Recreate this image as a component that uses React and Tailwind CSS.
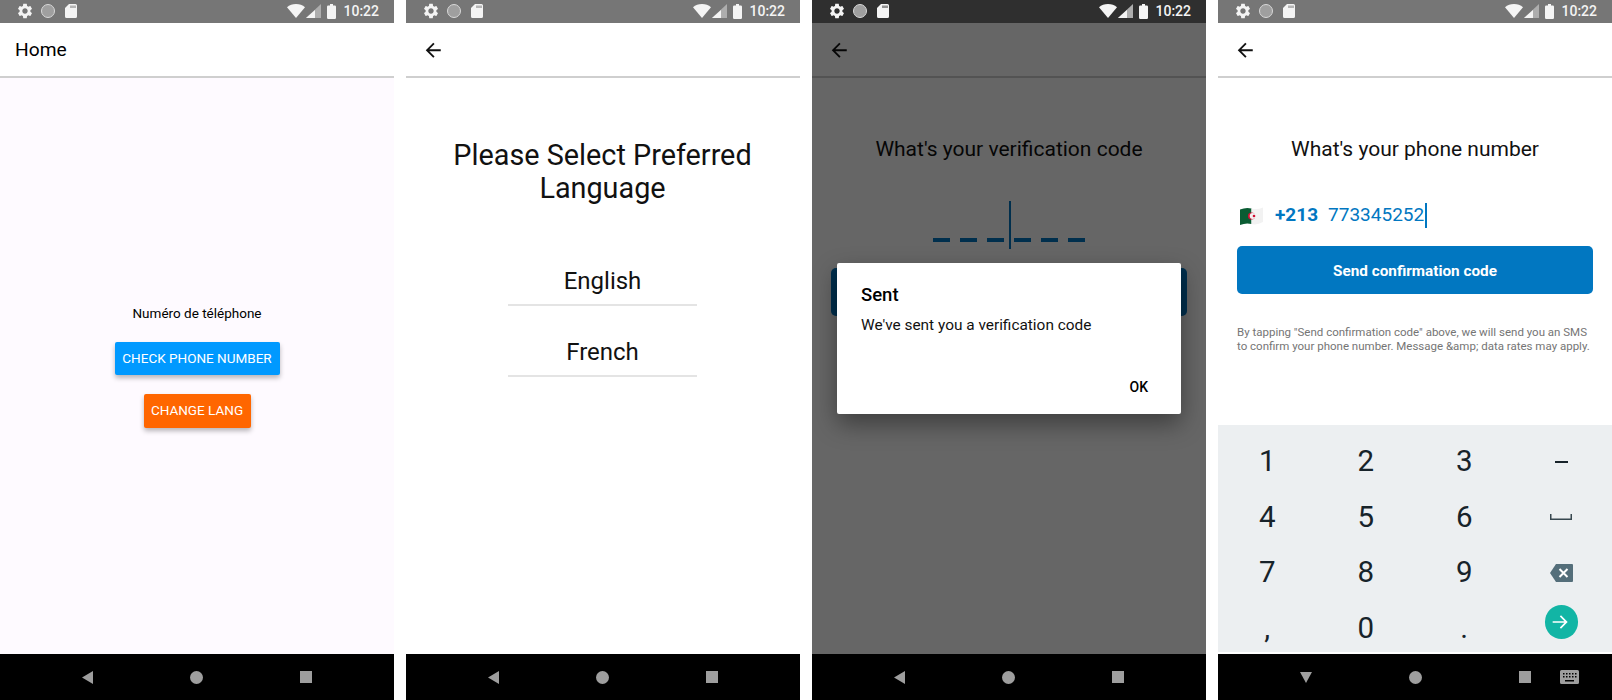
function Gear() {
  return (
    <svg width="18" height="18" viewBox="0 0 24 24" fill="currentColor">
      <path d="M19.14 12.94c.04-.3.06-.61.06-.94 0-.32-.02-.64-.07-.94l2.03-1.58c.18-.14.23-.41.12-.61l-1.92-3.32c-.12-.22-.37-.29-.59-.22l-2.39.96c-.5-.38-1.03-.7-1.62-.94l-.36-2.54c-.04-.24-.24-.41-.48-.41h-3.84c-.24 0-.43.17-.47.41l-.36 2.54c-.59.24-1.13.57-1.62.94l-2.39-.96c-.22-.08-.47 0-.59.22L2.74 8.87c-.12.21-.08.47.12.61l2.03 1.58c-.05.3-.09.63-.09.94s.02.64.07.94l-2.03 1.58c-.18.14-.23.41-.12.61l1.92 3.32c.12.22.37.29.59.22l2.39-.96c.5.38 1.03.7 1.62.94l.36 2.54c.05.24.24.41.48.41h3.84c.24 0 .44-.17.47-.41l.36-2.54c.59-.24 1.13-.56 1.62-.94l2.39.96c.22.08.47 0 .59-.22l1.92-3.32c.12-.22.07-.47-.12-.61l-2.01-1.58zM12 15.6c-1.98 0-3.6-1.62-3.6-3.6s1.62-3.6 3.6-3.6 3.6 1.62 3.6 3.6-1.62 3.6-3.6 3.6z" />
    </svg>
  )
}

function StatusBar({ dim }) {
  const bg = dim ? "#2f2f2f" : "#767676"
  return (
    <div className={`h-[22.5px] shrink-0 flex items-center justify-between pl-[16px] pr-[15px] text-[#f4f4f4] ${dim ? "bg-[#2f2f2f]" : "bg-[#767676]"}`}>
      <div className="flex items-center">
        <Gear />
        <div className="w-[14px] h-[14px] ml-[7px] rounded-full bg-[#9f9f9f] border border-[#d8d8d8]" />
        <svg className="ml-[10px]" width="12" height="14" viewBox="0 0 12 14" fill="currentColor">
          <path d="M4 0h6.5A1.5 1.5 0 0 1 12 1.5v11a1.5 1.5 0 0 1-1.5 1.5h-9A1.5 1.5 0 0 1 0 12.5V4z" />
          <path d="M5.5 1.5h1v2.5h-1zM7.5 1.5h1v2.5h-1zM9.5 1.5h1v2.5h-1z" fill={bg} />
        </svg>
      </div>
      <div className="flex items-center">
        <svg width="18" height="14" viewBox="0 0 18 14" fill="currentColor">
          <path d="M9 14 0 3.2C2.4 1.2 5.5 0 9 0s6.600 1.200 9 3.200z" />
        </svg>
        <svg className="ml-[1px]" width="15" height="14" viewBox="0 0 15 14">
          <path d="M15 0v14H0z" fill="#adadad" />
          <path d="M9 6v8H0L9 6z" fill="currentColor" />
        </svg>
        <svg className="ml-[6px]" width="9" height="15" viewBox="0 0 9 15" fill="currentColor">
          <path d="M3 0h3v1.500h1.800A1.200 1.200 0 0 1 9 2.700v11.100A1.200 1.200 0 0 1 7.800 15H1.200A1.200 1.200 0 0 1 0 13.800V2.700A1.200 1.200 0 0 1 1.200 1.500H3z" />
        </svg>
        <span className="ml-[7px] text-[14px] font-medium leading-none">10:22</span>
      </div>
    </div>
  )
}

function AppBar({ title }) {
  return (
    <div className="h-[55px] shrink-0 bg-white border-b-2 border-[#cfcfcf] flex items-center pt-[2px]">
      {title ? (
        <span className="ml-[15px] text-[19.2px] text-black">{title}</span>
      ) : (
        <svg className="ml-[16px]" width="22.5" height="22.5" viewBox="0 0 24 24" fill="#111">
          <path d="M20 11H7.830l5.590-5.590L12 4l-8 8 8 8 1.410-1.410L7.830 13H20v-2z" />
        </svg>
      )}
    </div>
  )
}

function NavBar({ keyboard }) {
  return (
    <div className="h-[46px] shrink-0 bg-black flex items-center pl-[82px] gap-[97px]">
      {keyboard ? (
        <svg width="12" height="11" viewBox="0 0 12 11" fill="#9e9e9e">
          <path d="M0 0h12L6 11z" />
        </svg>
      ) : (
        <svg width="11" height="13" viewBox="0 0 11 13" fill="#9e9e9e">
          <path d="M11 0v13L0 6.500z" />
        </svg>
      )}
      <div className="w-[13px] h-[13px] rounded-full bg-[#9e9e9e]" />
      <div className="flex items-center">
        <div className="w-[12px] h-[12px] bg-[#9e9e9e]" />
        {keyboard && (
          <svg className="ml-[29px]" width="19" height="14" viewBox="0 0 19 14" fill="#9e9e9e">
            <path d="M1.500 0h16A1.500 1.500 0 0 1 19 1.500v11a1.500 1.500 0 0 1-1.500 1.500h-16A1.500 1.500 0 0 1 0 12.500v-11A1.500 1.500 0 0 1 1.500 0z" />
            <path d="M3 3h1.500v1.500H3zM6 3h1.500v1.500H6zM9 3h1.500v1.500H9zM12 3h1.500v1.500H12zM15 3h1.500v1.500H15zM3 6h1.500v1.500H3zM6 6h1.500v1.500H6zM9 6h1.500v1.500H9zM12 6h1.500v1.500H12zM15 6h1.500v1.500H15zM5 10h9v1.500H5z" fill="#000" />
          </svg>
        )}
      </div>
    </div>
  )
}

function Phone({ title, keyboard, dim, children, overlay }) {
  return (
    <div className="relative w-[394px] h-[700px] flex flex-col shrink-0 overflow-hidden">
      <StatusBar dim={dim} />
      <AppBar title={title} />
      {children}
      <NavBar keyboard={keyboard} />
      {overlay}
    </div>
  )
}

function HomeScreen() {
  return (
    <div className="flex-1 bg-[#fefaff] flex flex-col items-center justify-center pt-[1px]">
      <p className="text-[13.5px] leading-[16px] text-black">Numéro de téléphone</p>
      <button className="mt-[21px] h-[33px] w-[165px] rounded-[2px] bg-[#0099ff] text-white text-[13.500px] shadow-[0_3px_5px_rgba(0,0,0,0.28)]">
        CHECK PHONE NUMBER
      </button>
      <button className="mt-[19px] h-[34px] w-[107px] pb-[1px] rounded-[2px] bg-[#ff6600] text-white text-[13.500px] shadow-[0_3px_5px_rgba(0,0,0,0.28)]">
        CHANGE LANG
      </button>
    </div>
  )
}

function LanguageScreen() {
  return (
    <div className="flex-1 bg-white flex flex-col items-center pt-[61px] pr-[1px]">
      <h1 className="w-[320px] text-center text-[28.8px] leading-[33px] text-[#111]">
        Please Select Preferred Language
      </h1>
      <div className="mt-[61px] w-[189px] pb-[8px] border-b-2 border-[#e4e4e4] text-center text-[24px] leading-[30px] text-[#111]">
        English
      </div>
      <div className="mt-[31px] w-[189px] pb-[8px] border-b-2 border-[#e4e4e4] text-center text-[24px] leading-[30px] text-[#111]">
        French
      </div>
    </div>
  )
}

function CodeScreen() {
  return (
    <div className="flex-1 bg-white flex flex-col pt-[57px]">
      <h2 className="text-center text-[21px] leading-[28px] text-[#111]">What's your verification code</h2>
      <div className="relative mt-[38px] h-[48px] flex items-end justify-center gap-[9.500px] pb-[7px]">
        {[0, 1, 2, 3, 4, 5].map(i => (
          <div key={i} className="w-[17.500px] h-[4px] bg-[#0177c1]" />
        ))}
        <div className="absolute left-[197px] top-0 w-[2px] h-[48px] bg-[#0177c1]" />
      </div>
      <div className="mt-[19px] mx-[19px] h-[48px] rounded-[5px] bg-[#0177c1]" />
    </div>
  )
}

function SentDialog() {
  return (
    <div className="absolute inset-x-0 top-[22.5px] h-[631.5px] bg-black/60">
      <div className="absolute left-[25px] top-[240.5px] w-[344px] h-[151px] rounded-[2px] bg-white shadow-[0_10px_24px_rgba(0,0,0,0.4)] pl-[24px] pr-[33px] pt-[21px]">
        <div className="text-[18.5px] leading-[22px] font-medium text-black">Sent</div>
        <div className="mt-[9px] text-[15.4px] leading-[20px] text-[#111]">We've sent you a verification code</div>
        <div className="mt-[43px] text-right text-[14px] leading-[18px] font-medium text-black">OK</div>
      </div>
    </div>
  )
}

function AlgeriaFlag() {
  return (
    <svg width="23" height="18" viewBox="0 0 23 18">
      <path d="M0 2.500Q6 0 11.500 1.500V17Q6 15.500 0 18z" fill="#0a5c33" />
      <path d="M11.500 1.500Q17 3 23 0.500V15Q17 18.500 11.500 17z" fill="#f2f2f2" />
      <circle cx="11.500" cy="9" r="3.600" fill="#d21034" />
      <circle cx="12.700" cy="9" r="3" fill="#f2f2f2" />
      <circle cx="14" cy="9" r="1.300" fill="#d21034" />
    </svg>
  )
}

const keys = ["1", "2", "3", "-", "4", "5", "6", "space", "7", "8", "9", "back", ",", "0", ".", "go"]

function Key({ k }) {
  if (k === "-") return <div className="w-[12.500px] h-[2px] mr-[3px] bg-[#17232a]" />
  if (k === "space") {
    return (
      <svg className="mr-[3px]" width="22" height="7" viewBox="0 0 22 7" fill="#37474f">
        <path d="M0 0h1.500v4.500h19V0H22v6H0z" />
      </svg>
    )
  }
  if (k === "back") {
    return (
      <svg className="mr-[3px]" width="23" height="18" viewBox="0 0 23 18">
        <path d="M6 0h16a1 1 0 0 1 1 1v16a1 1 0 0 1-1 1H6L0 9z" fill="#546e7a" />
        <path d="M9.500 5l8 8M17.500 5l-8 8" stroke="#fff" strokeWidth="2" />
      </svg>
    )
  }
  if (k === "go") {
    return (
      <div className="w-[33.500px] h-[33.500px] mb-[13px] mr-[3px] rounded-full bg-[#12b5a5] flex items-center justify-center">
        <svg width="20" height="20" viewBox="0 0 24 24" fill="#fff">
          <path d="M12 4l-1.410 1.410L16.170 11H2v2h14.170l-5.580 5.590L12 20l8-8z" />
        </svg>
      </div>
    )
  }
  return <span className="text-[29.500px] leading-none text-[#17232a]">{k}</span>
}

function PhoneScreen() {
  return (
    <div className="flex-1 bg-white flex flex-col pt-[57px] min-h-0">
      <h2 className="text-center text-[21px] leading-[28px] text-[#111]">What's your phone number</h2>
      <div className="mt-[39px] h-[28px] pl-[22px] flex items-center text-[#0177c1]">
        <AlgeriaFlag />
        <span className="ml-[12px] text-[19px] font-bold">+213</span>
        <span className="ml-[10px] text-[19px]">773345252</span>
        <div className="ml-[1px] w-[2px] h-[25px] bg-[#0177c1]" />
      </div>
      <div className="mt-[16px] mx-[19px] h-[48px] pt-[3px] rounded-[5px] bg-[#0177c1] flex items-center justify-center text-white text-[15.3px] font-bold">
        Send confirmation code
      </div>
      <p className="mt-[31px] mx-[19px] text-[11.500px] leading-[14px] text-[#757575] whitespace-nowrap">
        By tapping "Send confirmation code" above, we will send you an SMS
        <br />
        to confirm your phone number. Message &amp;amp; data rates may apply.
      </p>
      <div className="mt-auto mb-[2px] h-[227px] overflow-hidden bg-[#eceff1] pt-[9px] grid grid-cols-4 auto-rows-[55.500px]">
        {keys.map(k => (
          <div key={k} className="flex items-center justify-center">
            <Key k={k} />
          </div>
        ))}
      </div>
    </div>
  )
}

export default function App() {
  return (
    <div className="w-[1612px] h-[700px] bg-white flex gap-[12px] font-['Roboto',sans-serif]">
      <Phone title="Home"><HomeScreen /></Phone>
      <Phone><LanguageScreen /></Phone>
      <Phone dim overlay={<SentDialog />}><CodeScreen /></Phone>
      <Phone keyboard><PhoneScreen /></Phone>
    </div>
  )
}
